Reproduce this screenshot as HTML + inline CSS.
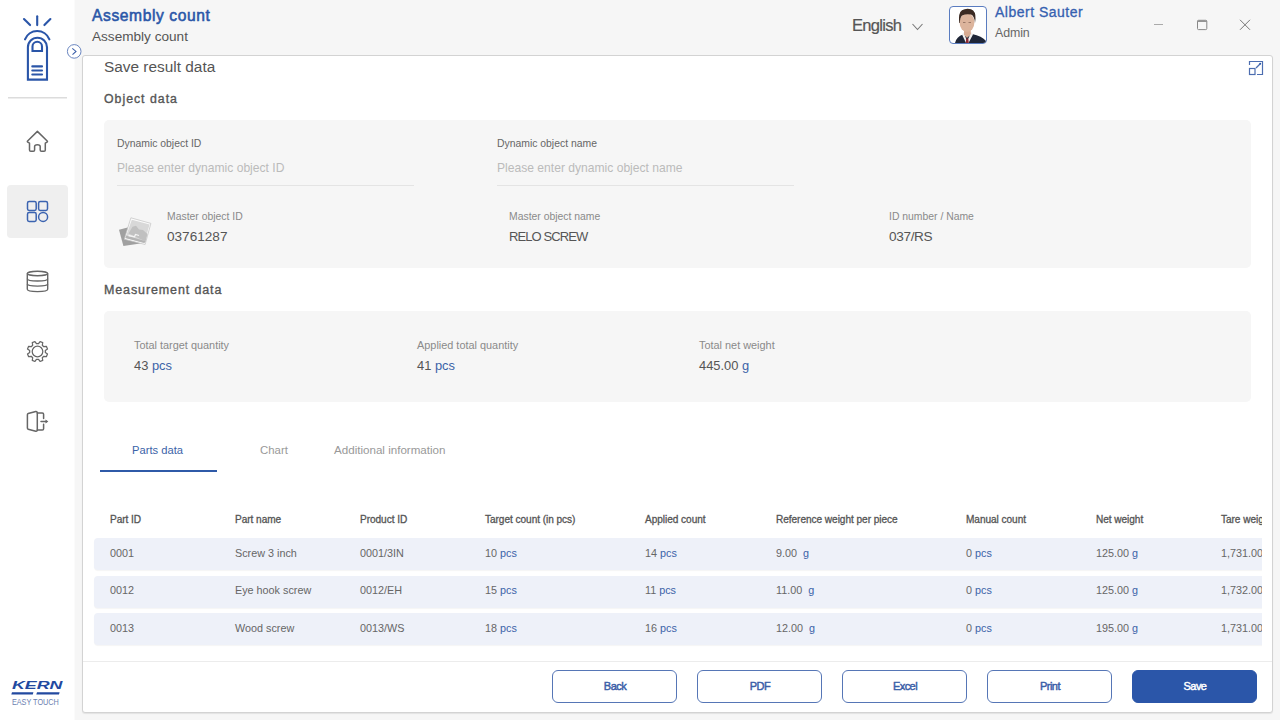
<!DOCTYPE html>
<html><head><meta charset="utf-8">
<style>
*{box-sizing:border-box;margin:0;padding:0}
html,body{width:1280px;height:720px;overflow:hidden;background:#f6f6f6;font-family:"Liberation Sans",sans-serif;color:#555}
.a{position:absolute;white-space:nowrap}
#side{position:absolute;left:0;top:0;width:74px;height:720px;background:#fff;box-shadow:1px 0 0 #fbfbfb}
.blue{color:#2a56a8}
.card{position:absolute;left:82px;top:55px;width:1191px;height:658px;background:#fff;border:1px solid #d3d3d3;border-radius:3px;box-shadow:0 1px 1px rgba(0,0,0,.08);overflow:hidden}
.panel{position:absolute;background:#f6f6f6;border-radius:5px}
.lbl{font-size:10.4px;color:#8a8a8a}
.val{font-size:13.6px;color:#555}
.th{font-size:10.1px;color:#555;-webkit-text-stroke:0.3px #555;letter-spacing:-0.05px}
.row{position:absolute;left:11px;width:1300px;height:32px;background:#eef1f9;border-radius:4px;box-shadow:0 1px 1px rgba(0,0,0,.045)}
.td{font-size:10.8px;color:#666}
.pc{color:#3b63a8}
.btn{position:absolute;top:613px;width:125px;height:33px;border:1px solid #5676b6;border-radius:6px;background:#fff;color:#3a5ea8;font-size:11px;letter-spacing:-0.55px;-webkit-text-stroke:0.45px currentColor;text-align:center;line-height:31px;padding-left:1px}
</style></head><body>
<div id="side">
  <svg class="a" style="left:0;top:0" width="75" height="100" viewBox="0 0 75 100">
    <g fill="none" stroke="#2a55a8" stroke-width="2.1" stroke-linecap="round">
      <line x1="37.2" y1="16.3" x2="37.2" y2="25.1"/>
      <line x1="24" y1="19" x2="30.1" y2="25.1"/>
      <line x1="50.4" y1="19" x2="44.4" y2="25.1"/>
      <path d="M25 39.3 A13.1 13.1 0 0 1 49.4 39.3"/>
      <path d="M27.9 79.6 V47.25 A9.55 9.55 0 0 1 47 47.25 V79.6 Z" stroke-linecap="butt"/>
      <path d="M32.5 51 V46.55 A4.75 4.75 0 0 1 42 46.55 V51 Z" stroke-linecap="butt"/>
      <line x1="32.3" y1="66.4" x2="42" y2="66.4"/>
      <line x1="32.3" y1="70.5" x2="42" y2="70.5"/>
      <line x1="32.3" y1="74.5" x2="42" y2="74.5"/>
    </g>
    <rect x="8" y="97" width="59" height="1.5" fill="#dcdcdc"/>
  </svg>
  <!-- home -->
  <svg class="a" style="left:20px;top:125px" width="35" height="35" viewBox="0 0 35 35">
    <path d="M17.4 6.4 L7.6 16 Q7 16.6 7.8 17.2 L9.5 18.2 V25 Q9.5 26.3 10.8 26.3 H13.3 Q14.6 26.3 14.6 25 V21.5 Q14.6 19.7 17.4 19.7 Q20.2 19.7 20.2 21.5 V25 Q20.2 26.3 21.5 26.3 H24 Q25.3 26.3 25.3 25 V18.2 L27 17.2 Q27.8 16.6 27.2 16 Z" fill="none" stroke="#666" stroke-width="1.5" stroke-linejoin="round"/>
  </svg>
  <div class="a" style="left:7px;top:185px;width:61px;height:53px;background:#efefef;border-radius:4px"></div>
  <svg class="a" style="left:20px;top:195px" width="35" height="35" viewBox="0 0 35 35">
    <g fill="none" stroke="#3b63b0" stroke-width="1.5">
      <rect x="7.5" y="6.6" width="8.7" height="8.8" rx="1.6"/>
      <rect x="18.6" y="6.6" width="8.9" height="8.8" rx="1.6"/>
      <rect x="7.5" y="17.6" width="8.7" height="8.8" rx="1.6"/>
      <circle cx="23.1" cy="21.9" r="4.5"/>
    </g>
  </svg>
  <!-- db -->
  <svg class="a" style="left:20px;top:265px" width="35" height="35" viewBox="0 0 35 35">
    <g fill="none" stroke="#666" stroke-width="1.4">
      <ellipse cx="17.5" cy="8.5" rx="10.2" ry="2.2"/>
      <path d="M7.3 8.5 V24.3 Q7.3 26.6 17.5 26.6 Q27.7 26.6 27.7 24.3 V8.5"/>
      <path d="M7.3 13.8 Q7.3 16 17.5 16 Q27.7 16 27.7 13.8"/>
      <path d="M7.3 19 Q7.3 21.1 17.5 21.1 Q27.7 21.1 27.7 19"/>
    </g>
  </svg>
  <!-- gear -->
  <svg class="a" style="left:20px;top:335px" width="35" height="35" viewBox="0 0 35 35">
    <g fill="none" stroke="#666" stroke-width="1.25" stroke-linejoin="round">
      <path d="M18.53 8.67 L20.08 6.53 L22.73 7.63 L22.31 10.23 L23.77 11.69 L26.37 11.27 L27.47 13.92 L25.33 15.47 L25.33 17.53 L27.47 19.08 L26.37 21.73 L23.77 21.31 L22.31 22.77 L22.73 25.37 L20.08 26.47 L18.53 24.33 L16.47 24.33 L14.92 26.47 L12.27 25.37 L12.69 22.77 L11.23 21.31 L8.63 21.73 L7.53 19.08 L9.67 17.53 L9.67 15.47 L7.53 13.92 L8.63 11.27 L11.23 11.69 L12.69 10.23 L12.27 7.63 L14.92 6.53 L16.47 8.67 Z"/>
      <circle cx="17.5" cy="16.5" r="5.3"/>
    </g>
  </svg>
  <!-- exit -->
  <svg class="a" style="left:20px;top:405px" width="35" height="35" viewBox="0 0 35 35">
    <g fill="none" stroke="#666" stroke-width="1.5" stroke-linejoin="round" stroke-linecap="round">
      <path d="M8.2 8.6 L15.8 6.6 Q17.3 6.4 17.3 7.8 V25 Q17.3 26.4 15.8 26.2 L8.2 24.2 Q7.4 24 7.4 23 V9.8 Q7.4 8.8 8.2 8.6 Z"/>
      <path d="M17.3 8 H22.3 Q23.6 8 23.6 9.3 V13.5"/>
      <path d="M23.6 19.3 V23.7 Q23.6 25 22.3 25 H17.3"/>
      <line x1="21" y1="16.5" x2="26.5" y2="16.5"/>
    </g>
    <path d="M25.5 14.4 L28.3 16.5 L25.5 18.6 Z" fill="#666"/>
  </svg>
  <!-- KERN logo -->
  <svg class="a" style="left:0;top:670px" width="75" height="50" viewBox="0 0 75 50">
    <text x="12" y="19.4" font-family="Liberation Sans" font-weight="bold" font-style="italic" font-size="11.5" fill="#2249a0" textLength="50.5" lengthAdjust="spacingAndGlyphs">KERN</text>
    <path d="M12 22.2 H33.4 L32.8 24.4 H11.3 Z M37 22.2 H59.6 L59 24.4 H36.3 Z" fill="#2249a0"/>
    <text x="11.9" y="34.7" font-family="Liberation Sans" font-size="8.6" fill="#6b80b0" textLength="47" lengthAdjust="spacingAndGlyphs">EASY TOUCH</text>
  </svg>
</div>
<!-- collapse circle -->
<svg class="a" style="left:66px;top:43px" width="17" height="17" viewBox="0 0 17 17">
  <circle cx="8.2" cy="8.4" r="6.8" fill="#fff" stroke="#6a86c0" stroke-width="1"/>
  <path d="M6.3 5.3 L10 8.4 L6.5 11.7" fill="none" stroke="#3a5ea8" stroke-width="1.05"/>
</svg>

<!-- header -->
<div class="a" style="left:92px;top:6px;font-size:15.6px;letter-spacing:0.6px;-webkit-text-stroke:0.55px #2a56a8;color:#2a56a8;line-height:20px">Assembly count</div>
<div class="a" style="left:92px;top:28px;font-size:13.6px;color:#555;line-height:18px">Assembly count</div>
<div class="a" style="left:852px;top:15px;font-size:16.5px;letter-spacing:-0.7px;-webkit-text-stroke:0.2px #555;color:#555;line-height:20px">English</div>
<svg class="a" style="left:911px;top:22px" width="13" height="10" viewBox="0 0 13 10"><path d="M1.5 2 L6.5 7.5 L11.5 2" fill="none" stroke="#777" stroke-width="1.1"/></svg>
<div class="a" style="left:949px;top:6px;width:38px;height:38px;border:1px solid #5a7cc0;border-radius:4px;background:#fff;overflow:hidden">
  <svg width="36" height="36" viewBox="0 0 36 36">
    <path d="M5 36 Q6.5 29.5 13 27.5 L17 30 L22 27 Q32 29 36 34 V36 Z" fill="#1f2638"/>
    <path d="M13.5 25 L17 34 L21.5 25 L23 27.5 L18.5 36 H16 L12 27.5 Z" fill="#f1efee"/>
    <path d="M16.2 31.5 H18.3 L18.8 36 H15.8 Z" fill="#8a2a33"/>
    <path d="M14 22 L14 27.5 L17 31 L21 27 L20.5 22 Z" fill="#d8ab92"/>
    <ellipse cx="17" cy="15.5" rx="7.4" ry="9.6" fill="#dcb49c"/>
    <path d="M9.2 16 Q8 6 12 3.3 Q16 0.8 21 2.2 Q26 4 25.5 12 L25 16 Q24.5 9 21 7.5 Q16 6.5 12 8.5 Q10 10.5 9.8 16 Z" fill="#3b2a22"/>
    <path d="M13 15.5 H15.5 M18.5 15.5 H21" stroke="#8a6a5a" stroke-width="0.8"/>
  </svg>
</div>
<div class="a" style="left:995px;top:2px;font-size:14px;line-height:20px;letter-spacing:0.5px;-webkit-text-stroke:0.3px #3560b0;color:#3560b0">Albert Sauter</div>
<div class="a" style="left:995px;top:24px;font-size:12.4px;letter-spacing:-0.1px;color:#666;line-height:18px">Admin</div>
<svg class="a" style="left:1150px;top:15px" width="105" height="20" viewBox="0 0 105 20">
  <line x1="4" y1="9.5" x2="13" y2="9.5" stroke="#aaa" stroke-width="1"/>
  <rect x="47.5" y="5.3" width="9.3" height="9.3" rx="1" fill="none" stroke="#888" stroke-width="1"/>
  <line x1="47.5" y1="6.3" x2="56.8" y2="6.3" stroke="#888" stroke-width="1.2"/>
  <path d="M90 4.8 L100 14.8 M100 4.8 L90 14.8" stroke="#777" stroke-width="1"/>
</svg>

<div class="card"><div class="a" style="left:0;top:1px">
  <!-- inner coordinates: abs - (83,57) -->
  <div class="a" style="left:21px;top:0px;font-size:15.4px;line-height:20px;color:#555">Save result data</div>
  <svg class="a" style="left:1165px;top:3px" width="16" height="16" viewBox="0 0 16 16">
    <g fill="none" stroke="#4c6db0" stroke-width="1.2">
      <path d="M1.5 5 V1.5 H14.5 V14.5 H9"/>
      <rect x="1.5" y="8.5" width="5.5" height="6"/>
      <line x1="8" y1="8" x2="12" y2="4"/>
    </g>
    <circle cx="12.2" cy="3.8" r="1" fill="#2a56a8"/>
  </svg>
  <div class="a" style="left:21px;top:33px;font-size:12.3px;letter-spacing:1px;-webkit-text-stroke:0.35px #555;line-height:18px;color:#555">Object data</div>

  <div class="panel" style="left:21px;top:63px;width:1147px;height:148px"></div>
  <div class="a" style="left:34px;top:80px;font-size:10.4px;line-height:14px;color:#666">Dynamic object ID</div>
  <div class="a" style="left:34px;top:103px;font-size:12.1px;line-height:17px;color:#bbb">Please enter dynamic object ID</div>
  <div class="a" style="left:34px;top:128px;width:297px;height:1px;background:#e4e4e4"></div>
  <div class="a" style="left:414px;top:80px;font-size:10.4px;line-height:14px;color:#666">Dynamic object name</div>
  <div class="a" style="left:414px;top:103px;font-size:12.1px;line-height:17px;color:#bbb">Please enter dynamic object name</div>
  <div class="a" style="left:414px;top:128px;width:297px;height:1px;background:#e4e4e4"></div>

  <svg class="a" style="left:34px;top:159px" width="40" height="34" viewBox="0 0 40 34">
    <path d="M2 13.8 L22 8.6 L26.5 27 L6.4 29.9 Z" fill="#a0a0a0"/>
    <path d="M13.9 1.8 L33.9 7.4 L28.1 28.5 L7.3 23.2 Z" fill="#fbfbfb" stroke="#c2c2c2" stroke-width="0.7"/>
    <path d="M14.8 3.8 L32.6 8.5 L27.3 27.1 L8.4 22.1 Z" fill="#d8d8d8"/>
    <path d="M11.5 17.5 L15.5 10.8 L19 9.8 L22 13.5 L26 14 L30.5 18 L28.6 25.5 Z" fill="#c0c0c0"/>
    <path d="M9.3 19.5 L28.8 25.2 L27.3 27.1 L8.4 22.1 Z" fill="#b4b4b4"/>
    <path d="M11.5 19.5 L17.5 20.8 L18.5 18.5 L22 19.5" fill="none" stroke="#f4f4f4" stroke-width="1.3"/>
  </svg>
  <div class="a lbl" style="left:84px;top:153px;line-height:14px">Master object ID</div>
  <div class="a val" style="left:84px;top:171px;line-height:18px">03761287</div>
  <div class="a lbl" style="left:426px;top:153px;line-height:14px">Master object name</div>
  <div class="a val" style="left:426px;top:171px;line-height:18px;font-size:13px;letter-spacing:-0.9px">RELO SCREW</div>
  <div class="a lbl" style="left:806px;top:153px;line-height:14px">ID number / Name</div>
  <div class="a val" style="left:806px;top:171px;line-height:18px;letter-spacing:-0.35px">037/RS</div>

  <div class="a" style="left:21px;top:224px;font-size:12.5px;letter-spacing:0.88px;-webkit-text-stroke:0.35px #555;line-height:18px;color:#555">Measurement data</div>
  <div class="panel" style="left:21px;top:254px;width:1147px;height:91px"></div>
  <div class="a lbl" style="left:51px;top:281px;font-size:10.9px;line-height:14px">Total target quantity</div>
  <div class="a" style="left:51px;top:300px;font-size:12.9px;line-height:18px;color:#555">43 <span class="pc">pcs</span></div>
  <div class="a lbl" style="left:334px;top:281px;font-size:10.9px;line-height:14px">Applied total quantity</div>
  <div class="a" style="left:334px;top:300px;font-size:12.9px;line-height:18px;color:#555">41 <span class="pc">pcs</span></div>
  <div class="a lbl" style="left:616px;top:281px;font-size:10.9px;line-height:14px">Total net weight</div>
  <div class="a" style="left:616px;top:300px;font-size:12.9px;line-height:18px;color:#555">445.00 <span class="pc">g</span></div>

  <!-- tabs -->
  <div class="a" style="left:49px;top:385px;font-size:11.2px;line-height:16px;color:#3b63a8">Parts data</div>
  <div class="a" style="left:177px;top:385px;font-size:11.4px;line-height:16px;color:#999">Chart</div>
  <div class="a" style="left:251px;top:385px;font-size:11.6px;line-height:16px;color:#999">Additional information</div>
  <div class="a" style="left:17px;top:413px;width:117px;height:2px;background:#2f5aa8"></div>

  <!-- table -->
  <div class="a" style="left:0;top:440px;width:1179px;height:160px;overflow:hidden">
    <div class="a th" style="left:27px;top:16px;line-height:14px">Part ID</div>
    <div class="a th" style="left:152px;top:16px;line-height:14px">Part name</div>
    <div class="a th" style="left:277px;top:16px;line-height:14px">Product ID</div>
    <div class="a th" style="left:402px;top:16px;line-height:14px">Target count (in pcs)</div>
    <div class="a th" style="left:562px;top:16px;line-height:14px">Applied count</div>
    <div class="a th" style="left:693px;top:16px;line-height:14px">Reference weight per piece</div>
    <div class="a th" style="left:883px;top:16px;line-height:14px">Manual count</div>
    <div class="a th" style="left:1013px;top:16px;line-height:14px">Net weight</div>
    <div class="a th" style="left:1138px;top:16px;line-height:14px">Tare weight</div>
    <div class="row" style="left:11px;top:41px"></div>
    <div class="a td" style="left:27px;top:49px;line-height:15px">0001</div>
    <div class="a td" style="left:152px;top:49px;line-height:15px">Screw 3 inch</div>
    <div class="a td" style="left:277px;top:49px;line-height:15px">0001/3IN</div>
    <div class="a td" style="left:402px;top:49px;line-height:15px">10 <span class="pc">pcs</span></div>
    <div class="a td" style="left:562px;top:49px;line-height:15px">14 <span class="pc">pcs</span></div>
    <div class="a td" style="left:693px;top:49px;line-height:15px">9.00&nbsp; <span class="pc">g</span></div>
    <div class="a td" style="left:883px;top:49px;line-height:15px">0 <span class="pc">pcs</span></div>
    <div class="a td" style="left:1013px;top:49px;line-height:15px">125.00 <span class="pc">g</span></div>
    <div class="a td" style="left:1138px;top:49px;line-height:15px">1,731.00 <span class="pc">g</span></div>
    <div class="row" style="left:11px;top:79px"></div>
    <div class="a td" style="left:27px;top:86px;line-height:15px">0012</div>
    <div class="a td" style="left:152px;top:86px;line-height:15px">Eye hook screw</div>
    <div class="a td" style="left:277px;top:86px;line-height:15px">0012/EH</div>
    <div class="a td" style="left:402px;top:86px;line-height:15px">15 <span class="pc">pcs</span></div>
    <div class="a td" style="left:562px;top:86px;line-height:15px">11 <span class="pc">pcs</span></div>
    <div class="a td" style="left:693px;top:86px;line-height:15px">11.00&nbsp; <span class="pc">g</span></div>
    <div class="a td" style="left:883px;top:86px;line-height:15px">0 <span class="pc">pcs</span></div>
    <div class="a td" style="left:1013px;top:86px;line-height:15px">125.00 <span class="pc">g</span></div>
    <div class="a td" style="left:1138px;top:86px;line-height:15px">1,732.00 <span class="pc">g</span></div>
    <div class="row" style="left:11px;top:116px"></div>
    <div class="a td" style="left:27px;top:124px;line-height:15px">0013</div>
    <div class="a td" style="left:152px;top:124px;line-height:15px">Wood screw</div>
    <div class="a td" style="left:277px;top:124px;line-height:15px">0013/WS</div>
    <div class="a td" style="left:402px;top:124px;line-height:15px">18 <span class="pc">pcs</span></div>
    <div class="a td" style="left:562px;top:124px;line-height:15px">16 <span class="pc">pcs</span></div>
    <div class="a td" style="left:693px;top:124px;line-height:15px">12.00&nbsp; <span class="pc">g</span></div>
    <div class="a td" style="left:883px;top:124px;line-height:15px">0 <span class="pc">pcs</span></div>
    <div class="a td" style="left:1013px;top:124px;line-height:15px">195.00 <span class="pc">g</span></div>
    <div class="a td" style="left:1138px;top:124px;line-height:15px">1,731.00 <span class="pc">g</span></div>
  </div>

  <div class="a" style="left:0;top:604px;width:1191px;height:1px;background:#ececec"></div>
  <div class="btn" style="left:469px">Back</div>
  <div class="btn" style="left:614px">PDF</div>
  <div class="btn" style="left:759px">Excel</div>
  <div class="btn" style="left:904px">Print</div>
  <div class="btn" style="left:1049px;background:#2b56a9;border-color:#2b56a9;color:#fff">Save</div>
</div></div>
</body></html>
